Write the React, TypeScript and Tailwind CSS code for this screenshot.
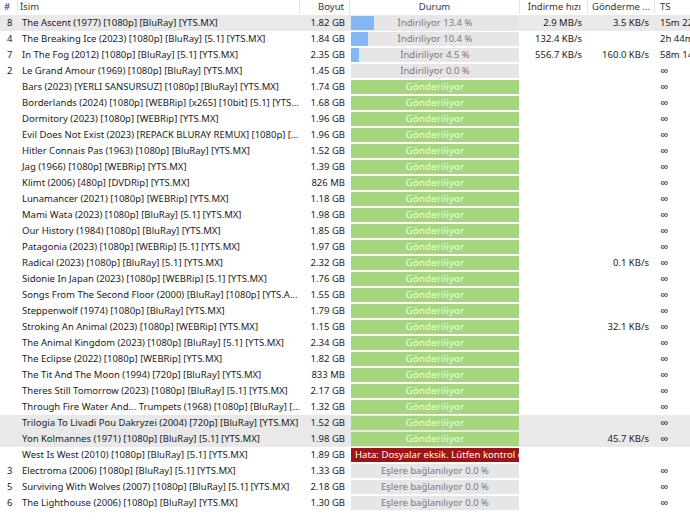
import React from 'react';

type Status =
  | { kind: 'down'; pct: number }
  | { kind: 'seed' }
  | { kind: 'error'; msg: string }
  | { kind: 'peers' };

interface Torrent {
  num?: string;
  name: string;
  size: string;
  status: Status;
  dl?: string;
  ul?: string;
  eta?: string;
  selected?: boolean;
}

const seed: Status = { kind: 'seed' };
const inf = '∞';

const torrents: Torrent[] = [
  { num: '8', name: 'The Ascent (1977) [1080p] [BluRay] [YTS.MX]', size: '1.82 GB', status: { kind: 'down', pct: 13.4 }, dl: '2.9 MB/s', ul: '3.5 KB/s', eta: '15m 22s', selected: true },
  { num: '4', name: 'The Breaking Ice (2023) [1080p] [BluRay] [5.1] [YTS.MX]', size: '1.84 GB', status: { kind: 'down', pct: 10.4 }, dl: '132.4 KB/s', eta: '2h 44m' },
  { num: '7', name: 'In The Fog (2012) [1080p] [BluRay] [5.1] [YTS.MX]', size: '2.35 GB', status: { kind: 'down', pct: 4.5 }, dl: '556.7 KB/s', ul: '160.0 KB/s', eta: '58m 14s' },
  { num: '2', name: 'Le Grand Amour (1969) [1080p] [BluRay] [YTS.MX]', size: '1.45 GB', status: { kind: 'down', pct: 0 }, eta: inf },
  { name: 'Bars (2023) [YERLI SANSURSUZ] [1080p] [BluRay] [YTS.MX]', size: '1.74 GB', status: seed, eta: inf },
  { name: 'Borderlands (2024) [1080p] [WEBRip] [x265] [10bit] [5.1] [YTS...', size: '1.68 GB', status: seed, eta: inf },
  { name: 'Dormitory (2023) [1080p] [WEBRip] [YTS.MX]', size: '1.96 GB', status: seed, eta: inf },
  { name: 'Evil Does Not Exist (2023) [REPACK BLURAY REMUX] [1080p] [...', size: '1.96 GB', status: seed, eta: inf },
  { name: 'Hitler Connais Pas (1963) [1080p] [BluRay] [YTS.MX]', size: '1.52 GB', status: seed, eta: inf },
  { name: 'Jag (1966) [1080p] [WEBRip] [YTS.MX]', size: '1.39 GB', status: seed, eta: inf },
  { name: 'Klimt (2006) [480p] [DVDRip] [YTS.MX]', size: '826 MB', status: seed, eta: inf },
  { name: 'Lunamancer (2021) [1080p] [WEBRip] [YTS.MX]', size: '1.18 GB', status: seed, eta: inf },
  { name: 'Mami Wata (2023) [1080p] [BluRay] [5.1] [YTS.MX]', size: '1.98 GB', status: seed, eta: inf },
  { name: 'Our History (1984) [1080p] [BluRay] [YTS.MX]', size: '1.85 GB', status: seed, eta: inf },
  { name: 'Patagonia (2023) [1080p] [WEBRip] [5.1] [YTS.MX]', size: '1.97 GB', status: seed, eta: inf },
  { name: 'Radical (2023) [1080p] [BluRay] [5.1] [YTS.MX]', size: '2.32 GB', status: seed, ul: '0.1 KB/s', eta: inf },
  { name: 'Sidonie In Japan (2023) [1080p] [WEBRip] [5.1] [YTS.MX]', size: '1.76 GB', status: seed, eta: inf },
  { name: 'Songs From The Second Floor (2000) [BluRay] [1080p] [YTS.A...', size: '1.55 GB', status: seed, eta: inf },
  { name: 'Steppenwolf (1974) [1080p] [BluRay] [YTS.MX]', size: '1.79 GB', status: seed, eta: inf },
  { name: 'Stroking An Animal (2023) [1080p] [WEBRip] [YTS.MX]', size: '1.15 GB', status: seed, ul: '32.1 KB/s', eta: inf },
  { name: 'The Animal Kingdom (2023) [1080p] [BluRay] [5.1] [YTS.MX]', size: '2.34 GB', status: seed, eta: inf },
  { name: 'The Eclipse (2022) [1080p] [WEBRip] [YTS.MX]', size: '1.82 GB', status: seed, eta: inf },
  { name: 'The Tit And The Moon (1994) [720p] [BluRay] [YTS.MX]', size: '833 MB', status: seed, eta: inf },
  { name: 'Theres Still Tomorrow (2023) [1080p] [BluRay] [5.1] [YTS.MX]', size: '2.17 GB', status: seed, eta: inf },
  { name: 'Through Fire Water And... Trumpets (1968) [1080p] [BluRay] [...', size: '1.32 GB', status: seed, eta: inf },
  { name: 'Trilogia To Livadi Pou Dakryzei (2004) [720p] [BluRay] [YTS.MX]', size: '1.52 GB', status: seed, eta: inf, selected: true },
  { name: 'Yon Kolmannes (1971) [1080p] [BluRay] [5.1] [YTS.MX]', size: '1.98 GB', status: seed, ul: '45.7 KB/s', eta: inf, selected: true },
  { name: 'West Is West (2010) [1080p] [BluRay] [5.1] [YTS.MX]', size: '1.89 GB', status: { kind: 'error', msg: 'Hata: Dosyalar eksik. Lütfen kontrol edin.' } },
  { num: '3', name: 'Electroma (2006) [1080p] [BluRay] [5.1] [YTS.MX]', size: '1.33 GB', status: { kind: 'peers' }, eta: inf },
  { num: '5', name: 'Surviving With Wolves (2007) [1080p] [BluRay] [5.1] [YTS.MX]', size: '2.18 GB', status: { kind: 'peers' }, eta: inf },
  { num: '6', name: 'The Lighthouse (2006) [1080p] [BluRay] [YTS.MX]', size: '1.30 GB', status: { kind: 'peers' }, eta: inf },
];

const cols = 'grid grid-cols-[18px_282px_50px_170px_68px_67px_90px]';

function StatusBar({ status }: { status: Status }) {
  if (status.kind === 'seed') {
    return (
      <div className="mx-px h-[14px] bg-[#a5d57d] text-center leading-[14px] tracking-[0.25px] text-[#f4fbee]">
        Gönderiliyor
      </div>
    );
  }
  if (status.kind === 'error') {
    return (
      <div className="mx-px h-[14px] overflow-hidden whitespace-nowrap bg-[#9c1414] pl-[4px] leading-[14px] tracking-[0.05px] text-white">
        {status.msg}
      </div>
    );
  }
  const label =
    status.kind === 'down' ? `İndiriliyor ${status.pct.toFixed(1)} %` : 'Eşlere bağlanılıyor 0.0 %';
  const pct = status.kind === 'down' ? status.pct : 0;
  return (
    <div className="relative mx-px h-[14px] whitespace-nowrap bg-[#e6e6e6] text-center leading-[14px] text-[#7a7a7a]">
      <div className="absolute inset-y-0 left-0 bg-[#84b8f4]" style={{ width: `${pct}%` }} />
      <span className="relative">{label}</span>
    </div>
  );
}

function Row({ t }: { t: Torrent }) {
  return (
    <div className={`${cols} h-[16px] items-center whitespace-nowrap ${t.selected ? 'bg-[#e9e9e9]' : 'bg-white'}`}>
      <div className="pl-[7px]">{t.num}</div>
      <div className="truncate pl-[4px]">{t.name}</div>
      <div className="pr-[5px] text-right">{t.size}</div>
      <StatusBar status={t.status} />
      <div className="pr-[6px] text-right">{t.dl}</div>
      <div className="pr-[6px] text-right">{t.ul}</div>
      {t.eta === inf ? (
        <div className="h-[16px] overflow-hidden pl-[5px] text-[11.5px] leading-[16px]">{inf}</div>
      ) : (
        <div className="pl-[5px]">{t.eta}</div>
      )}
    </div>
  );
}

export default function App() {
  return (
    <div
      className="h-[525px] w-[690px] overflow-hidden bg-white text-[9.5px] text-[#1b1b1b]"
      style={{ fontFamily: '"Noto Sans", "Open Sans", sans-serif' }}
    >
      <div className={`${cols} h-[14px] items-stretch whitespace-nowrap leading-[13px] text-[#333]`}>
        <div className="border-r border-[#e3e3e3] pl-[4px]">#</div>
        <div className="border-r border-[#e3e3e3] pl-[2px]">İsim</div>
        <div className="border-r border-[#e3e3e3] pr-[5px] text-right">Boyut</div>
        <div className="border-r border-[#e3e3e3] text-center">Durum</div>
        <div className="border-r border-[#e3e3e3] pr-[6px] text-right">İndirme hızı</div>
        <div className="truncate border-r border-[#e3e3e3] pl-[4px]">Gönderme ...</div>
        <div className="pl-[5px]">TS</div>
      </div>
      <div className="pt-px">
        {torrents.map((t, i) => (
          <Row key={i} t={t} />
        ))}
      </div>
    </div>
  );
}
